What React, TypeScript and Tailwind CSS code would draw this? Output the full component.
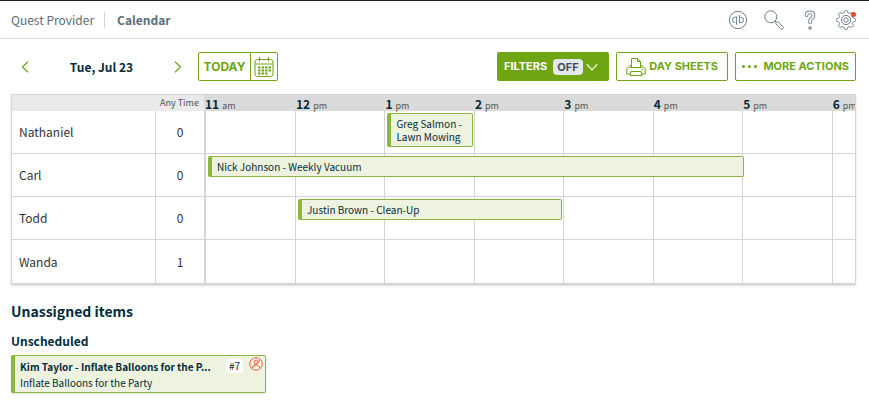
import type { ReactNode } from "react";

type Visit = {
  title: string;
  startHour: number;
  hours: number;
};

type Person = {
  name: string;
  anyTime: number;
  visits: Visit[];
};

const hourLabels = [
  { hour: 11, label: "11", suffix: "am" },
  { hour: 12, label: "12", suffix: "pm" },
  { hour: 13, label: "1", suffix: "pm" },
  { hour: 14, label: "2", suffix: "pm" },
  { hour: 15, label: "3", suffix: "pm" },
  { hour: 16, label: "4", suffix: "pm" },
  { hour: 17, label: "5", suffix: "pm" },
  { hour: 18, label: "6", suffix: "pm" },
];

const people: Person[] = [
  {
    name: "Nathaniel",
    anyTime: 0,
    visits: [{ title: "Greg Salmon - Lawn Mowing", startHour: 13, hours: 1 }],
  },
  {
    name: "Carl",
    anyTime: 0,
    visits: [{ title: "Nick Johnson - Weekly Vacuum", startHour: 11, hours: 6 }],
  },
  {
    name: "Todd",
    anyTime: 0,
    visits: [{ title: "Justin Brown - Clean-Up", startHour: 12, hours: 3 }],
  },
  { name: "Wanda", anyTime: 1, visits: [] },
];

// Eight soft teeth around a 20x20 box.
const gearPoints = Array.from({ length: 96 }, (_, i) => {
  const angle = (i / 96) * Math.PI * 2;
  const radius = 8.4 + 1.1 * Math.tanh(2.5 * Math.cos(8 * angle));
  return `${(10 + radius * Math.cos(angle)).toFixed(2)},${(10 + radius * Math.sin(angle)).toFixed(2)}`;
}).join(" ");

function QuickBooksIcon() {
  return (
    <svg width="20" height="20" viewBox="0 0 20 20" fill="none" stroke="currentColor">
      <circle cx="10" cy="10" r="8.6" />
      <path d="M8.6 6.6v8.2M8.6 7.1H7.2a2.7 2.7 0 0 0 0 5.4h.2M11.4 13V4.8M11.4 12.6h1.4a2.7 2.7 0 0 0 0-5.4h-.2" />
    </svg>
  );
}

function SearchIcon() {
  return (
    <svg width="20" height="20" viewBox="0 0 20 20" fill="none" stroke="currentColor" strokeLinejoin="round">
      <circle cx="6.8" cy="6.8" r="6" />
      <path d="m11 11 1.6 1.6" />
      <path d="M12 13.9a1 1 0 0 1 0-1.3l.7-.7a1 1 0 0 1 1.3 0l4.9 4.7a1.5 1.5 0 0 1 0 2.1 1.5 1.5 0 0 1-2.2 0z" />
    </svg>
  );
}

function HelpIcon() {
  return (
    <svg width="12" height="20" viewBox="0 0 12 20" fill="none" stroke="currentColor" strokeLinecap="round">
      <path d="M2.5 5.2C2.5 3.3 4 2.3 6 2.3s3.5 1.2 3.5 3.1C9.5 8.3 6 8.2 6 11.5v1" strokeWidth="3.6" />
      <path d="M2.5 5.2C2.5 3.3 4 2.3 6 2.3s3.5 1.2 3.5 3.1C9.5 8.3 6 8.2 6 11.5v1" stroke="white" strokeWidth="1.8" />
      <circle cx="6" cy="18" r="1.3" />
    </svg>
  );
}

function SettingsIcon() {
  return (
    <svg width="20" height="20" viewBox="0 0 20 20" fill="none" stroke="currentColor" strokeLinejoin="round">
      <polygon points={gearPoints} />
      <circle cx="10" cy="10" r="4.6" />
      <circle cx="10" cy="10" r="2.2" />
    </svg>
  );
}

function Chevron({ d, width, height }: { d: string; width: number; height: number }) {
  return (
    <svg width={width} height={height} viewBox={`0 0 ${width} ${height}`} fill="none" stroke="currentColor" strokeWidth="1.2">
      <path d={d} />
    </svg>
  );
}

function CalendarIcon() {
  return (
    <svg width="20" height="20" viewBox="0 0 20 20" fill="none" stroke="currentColor">
      <rect x="1" y="2.5" width="18" height="17" rx="2.5" />
      <path d="M1 7h18M5.5 0v4.500M14.5 0v4.5" />
      <path d="M4 10.5h13M4 13.5h13M4 16.5h10" strokeWidth="2" strokeDasharray="2.5 1" />
    </svg>
  );
}

function PrinterIcon() {
  return (
    <svg width="20" height="20" viewBox="0 0 20 20" fill="none" stroke="currentColor" strokeLinejoin="round">
      <path d="M5.5 10.5V1.5h6l3 3v6M11.5 1.5v3h3" />
      <path d="M5.5 8.5H4L.8 11.5v5.5h3.7M14.5 8.5H16l3.2 3v5.5h-3.7M3.5 10.5h13" />
      <path d="M5 14.5h10l1 4H4z" />
      <path d="M15.5 12.5H17" />
    </svg>
  );
}

function UnassignedIcon() {
  return (
    <svg width="14" height="14" viewBox="0 0 14 14" fill="none" stroke="currentColor">
      <circle cx="7" cy="7" r="6.3" />
      <circle cx="7.2" cy="5.2" r="2" />
      <path d="M3.2 11c.3-1.900 1.700-2.800 3.800-2.800s3.500.9 3.800 2.800M2.600 11.400l8.800-8.800" />
    </svg>
  );
}

function IconButton({ label, children }: { label: string; children: ReactNode }) {
  return (
    <button type="button" aria-label={label} className="relative cursor-pointer">
      {children}
    </button>
  );
}

function TopBar() {
  return (
    <header className="flex h-[39px] items-center justify-between border-t border-b border-t-[#1f1f1f] border-b-[#dadada] px-[11px] text-[#5b6e79]">
      <nav className="flex items-center text-[12px] leading-4">
        <a href="#">Quest Provider</a>
        <a href="#" className="ml-2.5 border-l border-[#d5d5d5] pl-3 font-bold">
          Calendar
        </a>
      </nav>
      <div className="flex items-center gap-5 pr-[2px] text-[#6b7f8c]">
        <div className="flex gap-4">
          <IconButton label="QuickBooks">
            <QuickBooksIcon />
          </IconButton>
          <IconButton label="Search">
            <SearchIcon />
          </IconButton>
        </div>
        <IconButton label="Help">
          <HelpIcon />
        </IconButton>
        <IconButton label="Settings">
          <SettingsIcon />
          <span className="absolute top-0.5 right-0 size-[5px] rounded-full bg-[#f0452b]" />
        </IconButton>
      </div>
    </header>
  );
}

function Toolbar() {
  return (
    <div className="flex items-center justify-between">
      <div className="flex items-center">
        <div className="flex w-[187px] items-center justify-between pr-4 pl-[10px] text-[#6fa512]">
          <button type="button" aria-label="Previous day">
            <Chevron width={8} height={12} d="M7 .8 1.5 6 7 11.2" />
          </button>
          <h1 className="text-[12px] leading-5 font-bold text-[#032b3a]">Tue, Jul 23</h1>
          <button type="button" aria-label="Next day">
            <Chevron width={8} height={12} d="M1 .8 6.5 6 1 11.2" />
          </button>
        </div>
        <div className="flex h-[29px] rounded-xs border border-[#6fa512] font-['Inter',sans-serif] text-[12px] font-bold text-[#6fa512]">
          <button type="button" className="w-[52px] border-r border-[#6fa512]">
            TODAY
          </button>
          <button type="button" aria-label="Pick a date" className="flex w-[26px] items-center justify-center">
            <CalendarIcon />
          </button>
        </div>
      </div>
      <div className="flex gap-[7px] font-['Inter',sans-serif] text-[11px] font-bold whitespace-nowrap text-[#6fa512]">
        <button type="button" className="flex h-[29px] w-[112px] items-center rounded-xs bg-[#6fa512] px-[7px] text-white">
          FILTERS
          <span className="ml-1.5 rounded-sm bg-[#e5e8ea] px-1 leading-4 text-[#3e4f59]">OFF</span>
          <span className="ml-auto pr-1">
            <Chevron width={12} height={8} d="M.8 1.2 6 6.8 11.2 1.2" />
          </span>
        </button>
        <button type="button" className="flex h-[29px] w-[112px] items-center justify-between rounded-xs border border-[#6fa512] px-[9px]">
          <PrinterIcon />
          DAY SHEETS
        </button>
        <button type="button" className="flex h-[29px] w-[121px] items-center justify-between rounded-xs border border-[#6fa512] px-[6px]">
          <span className="flex gap-[3px]">
            <span className="size-[3px] rounded-full bg-current" />
            <span className="size-[3px] rounded-full bg-current" />
            <span className="size-[3px] rounded-full bg-current" />
          </span>
          MORE ACTIONS
        </button>
      </div>
    </div>
  );
}

function VisitBlock({ visit }: { visit: Visit }) {
  return (
    <a
      href="#"
      className="absolute top-0.5 left-0.5 z-10 rounded-xs border border-l-4 border-[#8bb83c] bg-[#edf3df] py-[3px] pr-1 pl-[5px] text-[10px] leading-[13px] text-[#032b3a]"
      style={{ width: `calc(${visit.hours * 100}% + ${visit.hours - 4}px)` }}
    >
      {visit.title}
    </a>
  );
}

function Schedule() {
  return (
    <div className="mt-[13px] overflow-hidden border border-[#d5d5d5] shadow">
      <table className="w-full table-fixed border-separate border-spacing-0 text-[#333]">
        <colgroup>
          <col className="w-[143px]" />
          <col className="w-[49px]" />
          <col className="w-[91px]" />
          <col className="w-[10.61%]" />
          <col className="w-[10.61%]" />
          <col className="w-[10.61%]" />
          <col className="w-[10.61%]" />
          <col className="w-[10.61%]" />
          <col className="w-[10.61%]" />
          <col />
        </colgroup>
        <thead>
          <tr className="h-4 text-left text-[9px] leading-4">
            <td className="bg-[#eaeaea]" />
            <th scope="col" className="bg-[#eaeaea] text-center font-normal whitespace-nowrap text-[#555]">
              Any Time
            </th>
            {hourLabels.map((item) => (
              <th key={item.hour} scope="col" className="bg-[#dadada] pl-px font-normal whitespace-nowrap text-[#555]">
                <div className="flex h-4 items-baseline gap-[3px]">
                  <span className="text-[12px] leading-[18px] font-bold text-[#032b3a]">{item.label}</span>
                  <span>{item.suffix}</span>
                </div>
              </th>
            ))}
          </tr>
        </thead>
        <tbody>
          {people.map((person) => (
            <tr key={person.name} className="h-[43px] text-[12px] last:h-11 *:border-b *:border-[#d5d5d5]">
              <th scope="row" className="pl-[7px] text-left font-normal">
                {person.name}
              </th>
              <td className="border-l text-center">{person.anyTime}</td>
              {hourLabels.map((item) => (
                <td key={item.hour} className="relative border-l nth-3:border-l-2">
                  {person.visits
                    .filter((visit) => visit.startHour === item.hour)
                    .map((visit) => (
                      <VisitBlock key={visit.title} visit={visit} />
                    ))}
                </td>
              ))}
            </tr>
          ))}
        </tbody>
      </table>
    </div>
  );
}

function Unassigned() {
  return (
    <section className="text-[#032b3a]">
      <h2 className="mt-4 text-[14px] leading-5 font-bold">Unassigned items</h2>
      <h3 className="mt-3 text-[12px] leading-4 font-bold">Unscheduled</h3>
      <a
        href="#"
        className="mt-1.5 flex w-[255px] items-start rounded-xs border border-l-4 border-[#8bb83c] bg-[#edf3df] pt-[3px] pr-0.5 pb-px pl-[5px] text-[10px] leading-4 shadow"
      >
        <div className="whitespace-nowrap">
          <p className="font-bold">Kim Taylor - Inflate Balloons for the P...</p>
          <p>Inflate Balloons for the Party</p>
        </div>
        <span className="ml-auto rounded-sm bg-white px-[3px] leading-[14px]">#7</span>
        <span className="-mt-0.5 ml-1.5 text-[#f0604a]">
          <UnassignedIcon />
        </span>
      </a>
    </section>
  );
}

export default function App() {
  return (
    <div className="min-h-screen bg-white font-['Noto_Sans_CJK_SC',sans-serif]">
      <TopBar />
      <main className="px-[11px] pt-[13px] pr-[13px]">
        <Toolbar />
        <Schedule />
        <Unassigned />
      </main>
    </div>
  );
}
